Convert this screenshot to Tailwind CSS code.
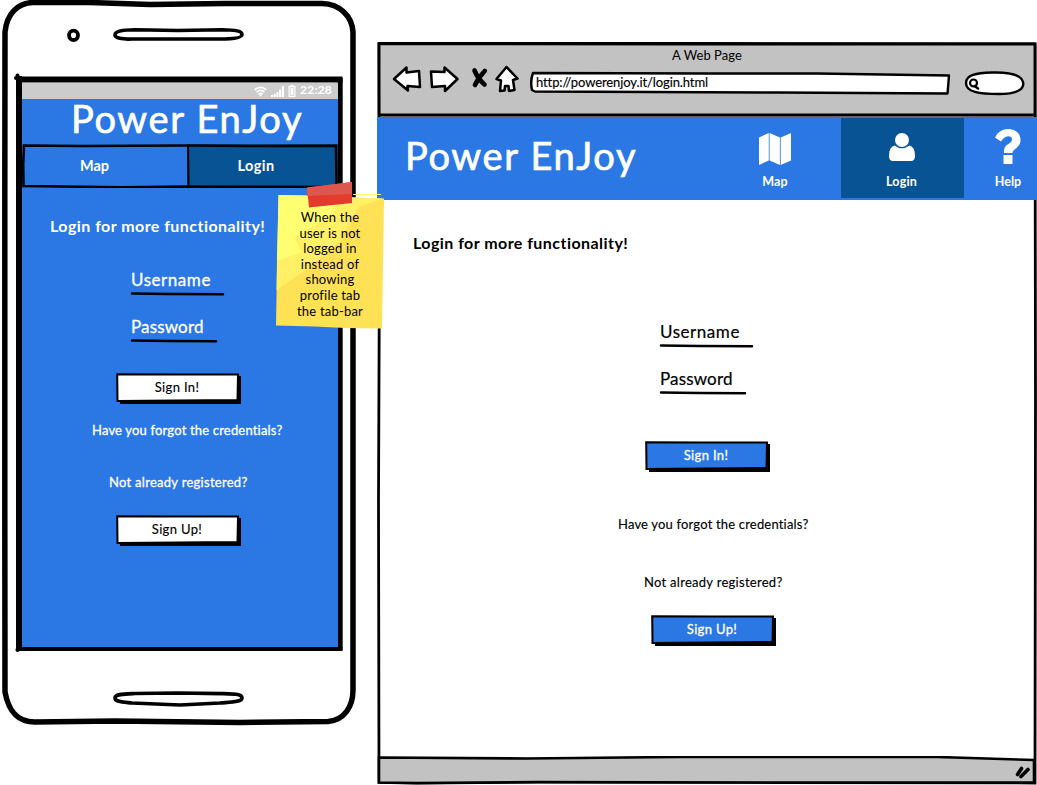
<!DOCTYPE html>
<html lang="en">
<head>
<meta charset="utf-8">
<title>Power EnJoy login</title>
<script src="https://cdn.jsdelivr.net/npm/@tailwindcss/browser@4"></script>
</head>
<body class="bg-white">
<main class="relative flex w-[1037px] h-[785px] overflow-hidden font-['Lato','Liberation_Sans',sans-serif] text-[13px] text-black whitespace-nowrap">

  <!-- Phone -->
  <section class="relative w-[377px] h-[785px] shrink-0 pl-[22px] pt-[83px]">
    <svg class="absolute left-0 top-0" width="377" height="785" fill="none" stroke="#000" stroke-linecap="round" stroke-linejoin="round">
      <path stroke-width="5.5" d="M5 32C7 13 18 3 33 2.500L90 2.500L150 4.500L225 3.500H322C340 4 352 16 353 32L353 160V690C353 707 344 720 328 721.500L240 722.500L115 721L35 722C15 722 8 708 5 692L4.800 500V200Z"/>
      <ellipse stroke-width="3.800" cx="73.500" cy="35.300" rx="4.500" ry="4.700"/>
      <path stroke-width="3.600" d="M115 35C115 31 122 30 135 29.800L178 30.500L222 29.800C236 30 242 31 242 34.500C242 38 232 39 220 39H132C122 39.500 115 38 115 35Z"/>
      <path stroke-width="3.600" d="M115 698C115 694 122 694 135 693.500L178 693L222 693.600C236 694 242 694 242 698C242 702 232 702 220 703L180 705L132 703C122 702 115 702 115 698Z"/>
      <path stroke-width="6" stroke-linecap="square" d="M19 79V647" />
      <path stroke-width="6" stroke-linecap="butt" d="M16 79.500H342.500"/>
      <path stroke-width="5" stroke-linecap="butt" d="M340.200 78V650"/>
      <path stroke-width="4" stroke-linecap="butt" d="M16 649H342.500"/>
      <path stroke-width="4" d="M17.500 75.500V78M16 78H18M17.500 649.500V650"/>
    </svg>
    <div class="relative flex flex-col w-[316px] h-[564px] bg-[#2b78e4]">
      <div class="flex items-center justify-end h-[16px] bg-[#cccccc] pr-[6px] gap-[4px] text-white">
        <svg width="13" height="11" viewBox="0 0 13 11" fill="none" stroke="#fff" stroke-width="1.700"><path d="M.6 3.800Q6.500-1 12.400 3.800M2.500 6Q6.500 2.700 10.500 6M4.300 8.200Q6.500 6.500 8.700 8.200"/><path fill="#fff" stroke="none" d="M4.800 8.600L6.500 10.800L8.200 8.600Z"/></svg>
        <svg width="13" height="11" viewBox="0 0 13 11" fill="#fff"><path d="M0 9h2v2H0zM2.700 8h2v3h-2zM5.400 6h2v5h-2zM8.100 3.500h2V11h-2zM10.800 0H13v11h-2.200z"/></svg>
        <svg width="8" height="12" viewBox="0 0 8 12"><path fill="#fff" fill-rule="evenodd" d="M2.500 0h3v1H7.500v11H.5V1h2zM1.700 2.200v8.600h4.600V2.200z"/><path fill="#fff" d="M2.600 3h2.800v7H2.600z"/></svg>
        <span class="relative -top-px text-[12px] leading-[14px] tracking-[0.2px] font-bold">22:28</span>
      </div>
      <h1 class="h-[45px] text-[38px] leading-[39px] tracking-[1.65px] text-white pl-[49px] [-webkit-text-stroke:0.700px_#fff]">Power EnJoy</h1>
      <nav class="relative grid grid-cols-[165px_151px] h-[44px] text-[14.5px] font-bold text-white">
        <div class="flex items-center justify-center pr-[20px]">Map</div>
        <div class="flex items-center justify-center bg-[#085394] pr-[13px] tracking-[0.4px]">Login</div>
        <svg class="absolute left-0 top-0" width="316" height="44" fill="none" stroke="#000" stroke-width="2.600"><path d="M2 1.500L60 2L165 1.500L230 2L314 1.800L314.500 41L312 43L165 42.600L100 43.200L1.500 42L1.200 20Z"/><path stroke-width="2" d="M166 2L166.500 42"/></svg>
      </nav>
      <div class="flex flex-col items-start text-white">
        <h2 class="mt-[28px] ml-[28px] text-[16px] leading-5 h-5 font-bold tracking-[0.45px]">Login for more functionality!</h2>
        <div class="mt-[34px] ml-[109px] text-[17px] leading-5 h-5 tracking-[0.55px] [-webkit-text-stroke:0.300px_#fff]">Username</div>
        <svg class="ml-[108px] mt-[1px]" width="96" height="6"><path d="M2 2.500L40 3L93 3.200" stroke="#000" stroke-width="2.500" stroke-linecap="round"/></svg>
        <div class="mt-[20px] ml-[109px] text-[17px] leading-5 h-5 tracking-[0.15px] [-webkit-text-stroke:0.300px_#fff]">Password</div>
        <svg class="ml-[108px] mt-[1px]" width="96" height="6"><path d="M2 2.500L40 3L86 3.200" stroke="#000" stroke-width="2.500" stroke-linecap="round"/></svg>
        <button class="relative mt-[29px] ml-[94px] w-[125px] h-[31px] text-black pb-[2px] pr-[3px] tracking-[0.35px]">
          <svg class="absolute inset-0" width="125" height="31"><path d="M4 3H125V31H4Z"/><path fill="#fff" stroke="#000" stroke-width="2" d="M1.200 1.300L60 1.500L122 1.600L121.500 27L60 27.500L1.500 28Z"/></svg>
          <span class="relative [-webkit-text-stroke:0.150px_#000]">Sign In!</span>
        </button>
        <p class="mt-[16px] ml-[70px] leading-5 h-5 tracking-[0.18px] [-webkit-text-stroke:0.300px_#fff]">Have you forgot the credentials?</p>
        <p class="mt-[32px] ml-[87px] leading-5 h-5 tracking-[0.28px] [-webkit-text-stroke:0.300px_#fff]">Not already registered?</p>
        <button class="relative mt-[23px] ml-[94px] w-[125px] h-[31px] text-black pb-[2px] pr-[3px] tracking-[0.35px]">
          <svg class="absolute inset-0" width="125" height="31"><path d="M4 3H125V31H4Z"/><path fill="#fff" stroke="#000" stroke-width="2" d="M1.200 1.300L60 1.500L122 1.600L121.500 27L60 27.500L1.500 28Z"/></svg>
          <span class="relative [-webkit-text-stroke:0.150px_#000]">Sign Up!</span>
        </button>
      </div>
    </div>
  </section>

  <!-- Browser window -->
  <section class="relative flex flex-col w-[660px] h-[785px] pt-[42px]">
    <svg class="absolute left-0 top-0" width="660" height="785" fill="none" stroke="#000" stroke-width="2.800">
      <path fill="#fff" d="M2 43.500L330 43.500L658 44L658.500 400L658 783L400 782.500L160 782L40 783.200L2 782.500L1.500 500L2.500 250Z"/>
    </svg>
    <header class="relative h-[75px]">
      <svg class="absolute left-0 top-0" width="660" height="75" fill="#fff" stroke="#000" stroke-width="2.500" stroke-linejoin="round" stroke-linecap="round">
        <path fill="#c2c2c2" stroke="none" d="M3.500 3H656.500V75H3.500Z"/>
        <path fill="none" stroke-width="2.800" d="M2 74V1.800L330 2L658 2V74M3 73H656"/>
        <path d="M17 37L29.500 25.500V30.500L42 29L43 45L30.500 44L31 48.500Z"/>
        <path d="M80.500 37L67.500 25.500V30L54 29.500L55 45L68 44V49Z"/>
        <path fill="none" stroke-width="4.600" d="M97.500 28.500Q101 37 107.500 42.500M107.800 29Q101 36 98 43"/>
        <path d="M129.500 25L119.500 37L124 38.500L123 49L127.500 48.500L128 44H131.500L132 49L137.500 48L136 38L140.500 36.500Z"/>
        <path stroke-width="2.400" d="M156 31L330 31.500L440 31.500L572 33.500L570.500 51.500L400 50.500L158 49.500L155 48Q153 39 156 31Z"/>
        <path stroke-width="2.400" d="M589 41C589 33 599 31 615 30.500C632 30 644 32 646 40C648 48 638 52 622 52C602 52 589 50 589 41Z"/>
        <circle cx="596.500" cy="41" r="3.500" stroke-width="2.200"/><path stroke-width="2.600" d="M597.500 44L601 46.500"/>
      </svg>
      <div class="relative text-center leading-4 pt-[5px] tracking-[0.05px]">A Web Page</div>
      <div class="relative pl-[159px] mt-[11px] leading-4 tracking-[-0.1px] [-webkit-text-stroke:0.150px_#000]">http://powerenjoy.it/login.html</div>
    </header>
    <div class="relative flex h-[83px] bg-[#2b78e4] text-white">
      <h1 class="w-[381px] shrink-0 pl-[28px] pt-[18px] text-[38px] leading-[41px] tracking-[1.65px] [-webkit-text-stroke:0.700px_#fff]">Power EnJoy</h1>
      <nav class="flex font-bold text-[12.500px] leading-4 shrink-0">
        <a class="flex flex-col items-center w-[34px] pt-[15px] mr-[49px]">
          <svg class="shrink-0" width="34" height="34" fill="#fff"><path d="M1 5.500L10.800 1V28.500L1 33ZM11.600 1L21.900 5.500V33L11.600 28.500ZM22.700 5.500L33 1V28.500L22.700 33Z"/></svg>
          <span class="mt-[8px] tracking-[0.100px]">Map</span>
        </a>
        <a class="flex flex-col items-center w-[123px] h-[80px] mt-[1px] pt-[14px] pr-[2px] bg-[#085394]">
          <svg class="shrink-0" width="26" height="30" fill="#fff"><circle cx="13" cy="8" r="7"/><path d="M5.500 13.500Q13 19 20.500 13.500Q26 15 26 24Q26 29 22 29H4Q0 29 0 24Q0 15 5.500 13.500Z"/></svg>
          <span class="mt-[12px] tracking-[0.200px]">Login</span>
        </a>
        <a class="flex flex-col items-center w-[88px] pt-[12px]">
          <svg class="shrink-0" width="26" height="36" fill="#fff"><path d="M0 8.500Q4 0 13 0C20 0 25.500 4 25.500 11C25.500 19 17.500 19.500 17.500 24H9C8 14 17 15.500 17 10.500C17 6 10 6 6 12.500Z"/><path d="M8.500 26H17.500V35H8.500Z"/></svg>
          <span class="mt-[9px]">Help</span>
        </a>
      </nav>
    </div>
    <div class="relative flex flex-col items-start h-[556px]">
      <h2 class="mt-[33px] ml-[36px] text-[16px] leading-5 h-5 font-bold tracking-[0.45px]">Login for more functionality!</h2>
      <div class="mt-[69px] ml-[283px] text-[17px] leading-5 h-5 tracking-[0.55px] [-webkit-text-stroke:0.200px_#000]">Username</div>
      <svg class="ml-[282px] mt-[1px]" width="96" height="6"><path d="M2 2.500L40 3L93 3.200" stroke="#000" stroke-width="2.500" stroke-linecap="round"/></svg>
      <div class="mt-[20px] ml-[283px] text-[17px] leading-5 h-5 tracking-[0.15px] [-webkit-text-stroke:0.200px_#000]">Password</div>
      <svg class="ml-[282px] mt-[1px]" width="96" height="6"><path d="M2 2.500L40 3L86 3.200" stroke="#000" stroke-width="2.500" stroke-linecap="round"/></svg>
      <button class="relative mt-[45px] ml-[268px] w-[125px] h-[31px] text-white pb-[2px] pr-[3px] tracking-[0.35px]">
        <svg class="absolute inset-0" width="125" height="31"><path d="M4 3H125V31H4Z"/><path fill="#2b78e4" stroke="#000" stroke-width="2" d="M1.200 1.300L60 1.500L122 1.600L121.500 27L60 27.500L1.500 28Z"/></svg>
        <span class="relative [-webkit-text-stroke:0.300px_#fff]">Sign In!</span>
      </button>
      <p class="mt-[42px] ml-[241px] leading-5 h-5 tracking-[0.18px] [-webkit-text-stroke:0.150px_#000]">Have you forgot the credentials?</p>
      <p class="mt-[38px] ml-[267px] leading-5 h-5 tracking-[0.28px] [-webkit-text-stroke:0.150px_#000]">Not already registered?</p>
      <button class="relative mt-[23px] ml-[274px] w-[125px] h-[31px] text-white pb-[2px] pr-[3px] tracking-[0.35px]">
        <svg class="absolute inset-0" width="125" height="31"><path d="M4 3H125V31H4Z"/><path fill="#2b78e4" stroke="#000" stroke-width="2" d="M1.200 1.300L60 1.500L122 1.600L121.500 27L60 27.500L1.500 28Z"/></svg>
        <span class="relative [-webkit-text-stroke:0.300px_#fff]">Sign Up!</span>
      </button>
    </div>
    <footer class="relative h-[29px]">
      <svg width="660" height="29" stroke="#000" stroke-width="2.600" stroke-linecap="round"><path fill="#c2c2c2" d="M2 1.500L150 2.500L300 1L560 1L657 4V26.500L400 26.500L160 26L40 27L2 26.500Z"/><path stroke-width="3.600" d="M640.500 18.500L644.500 12.500M644 20.500L651 13.500"/></svg>
    </footer>
  </section>

  <!-- Sticky note -->
  <aside class="absolute left-[275px] top-[180px] w-[112px] h-[152px]">
    <svg class="absolute inset-0" width="112" height="152">
      <path fill="#fee155" d="M3.500 15L30 15.500L109 18.500L107 148.500L70 148L40 146.500L1 145.500L2 90Z"/>
      <path fill="#ffff71" d="M3.500 15L31 15.500L66 17L58 34L20 58L27 72L14 78L2 81Z"/>
      <path fill="#fff066" d="M2 81L27 72L20 58L58 34L66 17L108 18.500L84 27L64 62L28 92L1.500 110Z"/>
      <path stroke="#fff471" d="M78 14.500H106"/>
      <path fill="#e33b2e" d="M32 7.500L77 2V23L34 27.500Z"/><path fill="#de574e" d="M32 7.500L77 2V14L32 16Z"/>
    </svg>
    <p class="relative pt-[30px] pr-[2px] text-center leading-[15.600px] tracking-[0.2px]">When the<br>user is not<br>logged in<br>instead of<br>showing<br>profile tab<br>the tab-bar</p>
  </aside>
</main>
</body>
</html>
